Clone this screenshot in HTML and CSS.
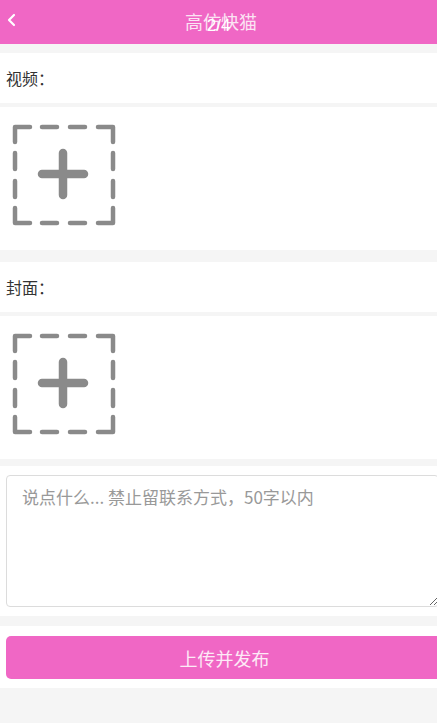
FILE: index.html
```html
<!DOCTYPE html>
<html lang="zh-CN">
<head>
<meta charset="utf-8">
<title>高仿快猫</title>
<link rel="stylesheet" href="styles.css">
</head>
<body>
<header class="topbar">
  <span class="back">
    <svg width="10" height="14" viewBox="0 0 10 14"><path d="M8 2 L3 7 L8 12" fill="none" stroke="#fff" stroke-width="2.2" stroke-linecap="round" stroke-linejoin="round"/></svg>
  </span>
  <h1 class="title">高仿快猫<span class="pager">2/4</span></h1>
  <span class="spacer"></span>
</header>

<section class="label-row">视频：</section>
<section class="upload-row">
  <div class="upload-box">
    <svg width="104" height="102" viewBox="-1 -1 104 102">
      <g fill="none" stroke="#8a8a8a" stroke-width="4.5" stroke-linecap="round" stroke-linejoin="round">
        <path d="M2 17 V2 H17"/><path d="M29 2 H44"/><path d="M57 2 H72"/><path d="M85 2 H100 V17"/>
        <path d="M2 28 V44"/><path d="M2 56 V72"/><path d="M100 28 V44"/><path d="M100 56 V72"/>
        <path d="M2 83 V98 H17"/><path d="M29 98 H44"/><path d="M57 98 H72"/><path d="M85 98 H100 V83"/>
      </g>
      <g fill="none" stroke="#8a8a8a" stroke-width="8.5" stroke-linecap="round">
        <path d="M29 49 H71"/><path d="M50 28 V70"/>
      </g>
    </svg>
  </div>
</section>

<section class="label-row second">封面：</section>
<section class="upload-row">
  <div class="upload-box">
    <svg width="104" height="102" viewBox="-1 -1 104 102">
      <g fill="none" stroke="#8a8a8a" stroke-width="4.5" stroke-linecap="round" stroke-linejoin="round">
        <path d="M2 17 V2 H17"/><path d="M29 2 H44"/><path d="M57 2 H72"/><path d="M85 2 H100 V17"/>
        <path d="M2 28 V44"/><path d="M2 56 V72"/><path d="M100 28 V44"/><path d="M100 56 V72"/>
        <path d="M2 83 V98 H17"/><path d="M29 98 H44"/><path d="M57 98 H72"/><path d="M85 98 H100 V83"/>
      </g>
      <g fill="none" stroke="#8a8a8a" stroke-width="8.5" stroke-linecap="round">
        <path d="M29 49 H71"/><path d="M50 28 V70"/>
      </g>
    </svg>
  </div>
</section>

<section class="text-row">
  <textarea class="desc" placeholder="说点什么... 禁止留联系方式，50字以内"></textarea>
</section>

<section class="btn-row">
  <button class="submit">上传并发布</button>
</section>
</body>
</html>
```
FILE: styles.css
```css
* { box-sizing: border-box; }
html, body { margin: 0; padding: 0; }
body {
  background: #f5f5f5;
  font-family: "Microsoft YaHei", "Noto Sans CJK SC", sans-serif;
  color: #333;
  width: 437px;
  overflow: hidden;
}
.topbar {
  height: 44px;
  background: #f067c5;
  display: flex;
  align-items: center;
  position: relative;
}
.back {
  width: 40px;
  padding-left: 6px;
  display: flex;
  align-items: center;
  margin-top: -4px;
}
.title {
  flex: 1;
  margin: -3px 0 0 5px;
  text-align: center;
  font-size: 18px;
  font-weight: normal;
  color: #fbe3f3;
  position: relative;
  line-height: 24px;
}
.pager {
  position: absolute;
  left: 50%;
  top: 8px;
  transform: translateX(-60%);
  color: #fff;
  font-family: "Liberation Sans", sans-serif;
  font-size: 17px;
  line-height: 18px;
}
.spacer { width: 40px; }

.label-row {
  background: #fff;
  height: 50px;
  margin-top: 9px;
  padding-left: 6px;
  display: flex;
  align-items: center;
  font-size: 16px;
  color: #333;
}
.label-row.second { margin-top: 12px; }
.upload-row {
  background: #fff;
  height: 143px;
  margin-top: 4px;
  padding: 17px 0 0 12px;
}
.upload-box svg { display: block; }

.text-row {
  background: #fff;
  margin-top: 7px;
  height: 150px;
  padding: 9px 0 0 6px;
}
.desc {
  display: block;
  width: 433px;
  height: 132px;
  border: 1px solid #dcdcdc;
  border-radius: 4px;
  padding: 9px 15px;
  font-family: "Microsoft YaHei", "Noto Sans CJK SC", sans-serif;
  font-size: 17px;
  line-height: 24px;
  color: #333;
  background: #fff;
}
.desc::placeholder { color: #999; }

.btn-row {
  background: #fff;
  margin-top: 10px;
  height: 62px;
  padding: 10px 0 0 6px;
}
.submit {
  display: block;
  width: 437px;
  height: 43px;
  border: none;
  border-radius: 5px;
  background: #f067c5;
  color: #fdeaf6;
  font-family: "Microsoft YaHei", "Noto Sans CJK SC", sans-serif;
  font-size: 18px;
  padding: 0;
}
```
